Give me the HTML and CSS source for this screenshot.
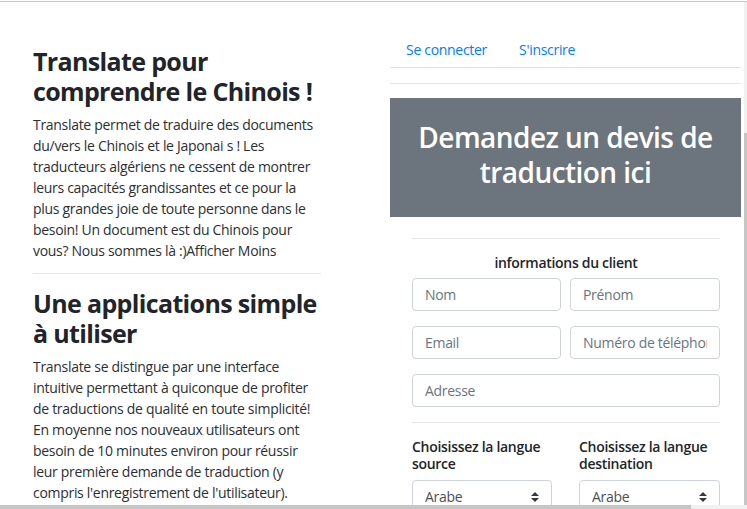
FILE: index.html
```html
<!DOCTYPE html>
<html lang="fr">
<head>
<meta charset="utf-8">
<title>Translate</title>
<link rel="stylesheet" href="styles.css">
</head>
<body>
<div class="page">
  <main class="col-left">
    <section class="feature">
      <h2 class="feature-title">Translate pour comprendre le Chinois !</h2>
      <p class="feature-text">Translate permet de traduire des documents du/vers le Chinois et le Japonai s ! Les traducteurs algériens ne cessent de montrer leurs capacités grandissantes et ce pour la plus grandes joie de toute personne dans le besoin! Un document est du Chinois pour vous? Nous sommes là :)Afficher Moins</p>
    </section>
    <hr class="divider">
    <section class="feature">
      <h2 class="feature-title">Une applications simple à utiliser</h2>
      <p class="feature-text">Translate se distingue par une interface intuitive permettant à quiconque de profiter de traductions de qualité en toute simplicité! En moyenne nos nouveaux utilisateurs ont besoin de 10 minutes environ pour réussir leur première demande de traduction (y compris l'enregistrement de l'utilisateur).</p>
    </section>
  </main>
  <aside class="col-right">
    <nav class="nav">
      <a class="nav-link" href="#">Se connecter</a>
      <a class="nav-link" href="#">S'inscrire</a>
    </nav>
    <hr class="divider nav-sep">
    <div class="banner">
      <h1 class="banner-title">Demandez un devis de traduction ici</h1>
    </div>
    <form class="quote">
      <hr class="divider">
      <h6 class="quote-title">informations du client</h6>
      <div class="field-row">
        <input class="control" type="text" placeholder="Nom">
        <input class="control" type="text" placeholder="Prénom">
      </div>
      <div class="field-row">
        <input class="control" type="email" placeholder="Email">
        <input class="control" type="tel" placeholder="Numéro de téléphone">
      </div>
      <input class="control" type="text" placeholder="Adresse">
      <hr class="divider form-sep">
      <div class="lang-row">
        <div class="lang-group">
          <label class="lang-label" for="src">Choisissez la langue source</label>
          <div class="select-wrap">
            <select class="control select" id="src"><option>Arabe</option></select>
            <svg class="select-arrow" viewBox="0 0 4 5" width="8" height="10"><path d="M2 0L0 2h4zm0 5L0 3h4z" fill="#343a40"/></svg>
          </div>
        </div>
        <div class="lang-group">
          <label class="lang-label" for="dst">Choisissez la langue destination</label>
          <div class="select-wrap">
            <select class="control select" id="dst"><option>Arabe</option></select>
            <svg class="select-arrow" viewBox="0 0 4 5" width="8" height="10"><path d="M2 0L0 2h4zm0 5L0 3h4z" fill="#343a40"/></svg>
          </div>
        </div>
      </div>
    </form>
  </aside>
</div>
<div class="vscroll"><div class="vthumb"></div></div>
<div class="hscroll"><div class="hthumb"></div></div>
</body>
</html>
```

FILE: styles.css
```css
* { box-sizing: border-box; }

html, body {
  margin: 0;
  padding: 0;
}

body {
  margin-top: 1px;
  border-top: 1px solid #c5c8cb;
  font-family: "Open Sans", "Noto Sans", sans-serif;
  font-size: 14px;
  line-height: 21px;
  color: #212529;
  background: #fff;
  height: 508px;
  overflow: hidden;
}

.page {
  display: flex;
  align-items: flex-start;
  padding-left: 33px;
}

.col-left {
  width: 288px;
  flex: none;
  padding-top: 44px;
}

.feature-title {
  margin: 0 0 8px;
  font-size: 25px;
  line-height: 30px;
  font-weight: 700;
  letter-spacing: -0.65px;
  color: #212529;
}

.feature-text {
  margin: 0;
  letter-spacing: -0.3px;
  color: #2b2f33;
}

.divider {
  margin: 12px 0 14px;
  height: 0;
  border: 0;
  border-top: 1px solid #e6e6e6;
}

.col-right {
  width: 351px;
  flex: none;
  margin-left: 69px;
  padding-top: 28px;
}

.nav {
  display: flex;
  border-bottom: 1px solid #dee2e6;
}

.nav-link {
  padding: 9px 16px 7px;
  color: #007bff;
  text-decoration: none;
  letter-spacing: -0.3px;
}

.nav-sep {
  margin: 15px 0 14px;
}

.banner {
  background: #6c757d;
  padding: 22px 10px 28px;
  text-align: center;
}

.banner-title {
  margin: 0;
  color: #fff;
  font-size: 28px;
  line-height: 34.5px;
  font-weight: 600;
  letter-spacing: -0.55px;
}

.quote {
  padding: 0 21px 0 22px;
}

.quote > .divider:first-child {
  margin: 21px 0 13px;
}

.quote-title {
  margin: 0 0 5px;
  text-align: center;
  font-size: 14px;
  line-height: 21px;
  font-weight: 600;
  letter-spacing: -0.3px;
}

.field-row {
  display: grid;
  grid-template-columns: 149px 150px;
  column-gap: 9px;
  margin-bottom: 15px;
}

.control {
  display: block;
  width: 100%;
  height: 33px;
  padding: 0 12px;
  font-family: inherit;
  font-size: 14px;
  letter-spacing: -0.3px;
  color: #495057;
  background: #fff;
  border: 1px solid #ced4da;
  border-radius: 4px;
  outline: none;
}

.control::placeholder {
  color: #6c757d;
  opacity: 1;
}

.form-sep {
  margin: 15px 0 16px;
}

.lang-row {
  display: grid;
  grid-template-columns: 140px 141px;
  column-gap: 27px;
}

.lang-label {
  display: block;
  margin-bottom: 7px;
  font-size: 14px;
  line-height: 16.8px;
  font-weight: 600;
  letter-spacing: -0.3px;
}

.select-wrap {
  position: relative;
}

.select {
  appearance: none;
  -webkit-appearance: none;
  padding-right: 28px;
}

.select-arrow {
  position: absolute;
  right: 13px;
  top: 12px;
  pointer-events: none;
}

.vscroll {
  position: fixed;
  left: 744px;
  top: 2px;
  width: 3px;
  height: 503px;
  background: #f1f1f1;
}

.vthumb {
  margin-top: 131px;
  height: 372px;
  background: #c6c6c6;
}

.hscroll {
  position: fixed;
  left: 0;
  top: 505px;
  width: 747px;
  height: 4px;
  background: #f1f1f1;
}

.hthumb {
  width: 691px;
  height: 4px;
  background: #c6c6c6;
}
```
